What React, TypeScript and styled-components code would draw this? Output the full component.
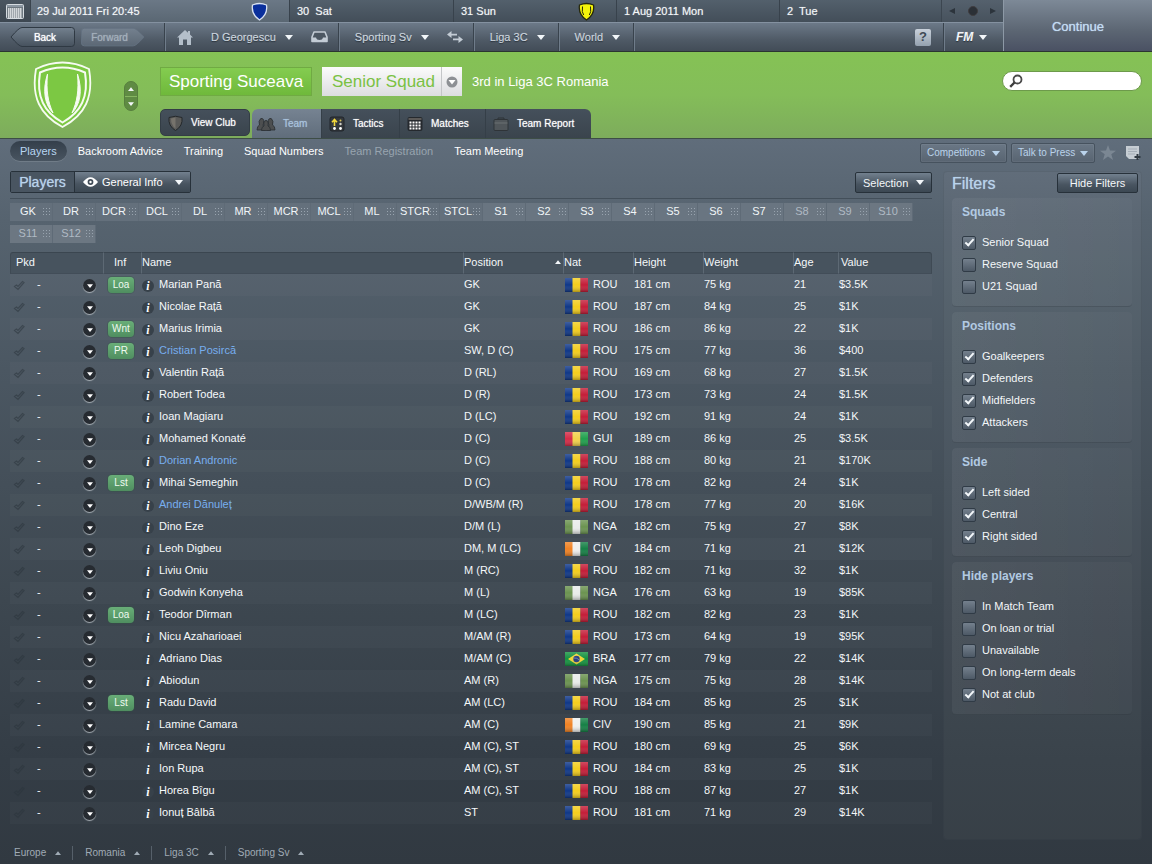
import React from "react";
import styled, { createGlobalStyle, css } from "styled-components";

const Global = createGlobalStyle`
  *, *::before, *::after { box-sizing: border-box; }
  body {
    margin: 0;
    background: #323a43;
    color: #f4f7f9;
    font-family: "Liberation Sans", Arial, Helvetica, sans-serif;
    font-size: 11px;
    line-height: 14px;
  }
  button, select, input { font: inherit; color: inherit; margin: 0; }
  button { cursor: pointer; background: none; border: 0; padding: 0; white-space: nowrap; }
  a { color: inherit; text-decoration: none; white-space: nowrap; }
`;

const Page = styled.div`
  min-height: 100vh;
  display: flex;
  flex-direction: column;
  background: linear-gradient(#606d7b 139px, #56636f 220px, #4b5762 370px, #3d4750 600px, #343d46 760px, #313941 864px);
`;

/* ---------- top bars ---------- */

const TopArea = styled.header`
  display: flex;
  height: 52px;
  border-bottom: 1px solid #2b3531;
`;

const TopRows = styled.div`
  flex: 1;
  min-width: 0;
`;

const DayBar = styled.div`
  display: grid;
  grid-template-columns: 31px 258fr 164fr 163fr 163fr 162fr 62px;
  height: 22px;
  background: linear-gradient(#53606c, #434e59);
`;

const DayCell = styled.div<{ $today?: boolean }>`
  display: flex;
  align-items: center;
  justify-content: space-between;
  padding: 0 21px 0 7px;
  border-left: 1px solid #38424c;
  text-shadow: 0 0 1px rgba(255, 255, 255, 0.5);
  ${(p) =>
    p.$today &&
    css`
      padding: 0 21px 0 6px;
      background: linear-gradient(#6b7886, #5a6773);
      border-left: 0;
    `}
`;

const CalendarCell = styled.button`
  display: flex;
  align-items: center;
  justify-content: center;
  background: linear-gradient(#4a5560, #3d4751);
  border-right: 1px solid #3a444e;
`;

const Pager = styled.div`
  display: flex;
  align-items: center;
  justify-content: space-between;
  padding: 0 7px;
  border-left: 1px solid #3c4650;
  background: linear-gradient(#55616d, #47525d);
`;

const PagerButton = styled.button`
  display: flex;
`;

const NavBar = styled.nav`
  display: flex;
  height: 29px;
  border-top: 1px solid #8491a0;
  background: linear-gradient(#6c7988, #4f5a66 60%, #424c57);
`;

const NavGroup = styled.div<{ $kind?: "history" | "home" | "menu" | "fm" }>`
  display: flex;
  align-items: center;
  gap: 18px;
  padding: 0 10px 0 16px;
  color: #ccd5de;
  border-left: 1px solid #39434d;
  box-shadow: inset 1px 0 0 #6f7c8a;
  text-shadow: 0 1px 1px rgba(20, 28, 36, 0.7), 0 0 1px rgba(210, 220, 230, 0.6);
  ${(p) =>
    p.$kind === "history" &&
    css`
      border-left: 0;
      box-shadow: none;
      gap: 6px;
      padding: 0 19px 0 10px;
    `}
  ${(p) => p.$kind === "home" && css`padding-left: 12px;`}
  ${(p) => p.$kind === "menu" && css`padding-right: 13px;`}
  ${(p) =>
    p.$kind === "fm" &&
    css`
      width: 60px;
      padding: 0 0 0 12px;
    `}
`;

const NavMenu = styled.button<{ $tight?: boolean }>`
  display: flex;
  align-items: center;
  gap: ${(p) => (p.$tight ? 6 : 9)}px;
  text-shadow: inherit;
`;

const IconButton = styled.button`
  display: flex;
`;

const ArrowButton = styled.button<{ $dir: "back" | "forward" }>`
  display: grid;
  width: ${(p) => (p.$dir === "back" ? 65 : 64)}px;
  height: 22px;
  font-size: 10px;
  color: ${(p) => (p.$dir === "back" ? "#ffffff" : "#a3afbb")};
  text-shadow: 0 0 1px currentColor;
  > * { grid-area: 1 / 1; }
`;

const ArrowText = styled.span<{ $dir: "back" | "forward" }>`
  align-self: center;
  padding: ${(p) => (p.$dir === "back" ? "2px 0 0 5px" : "1px 7px 0 0")};
`;

const Grow = styled.div`
  flex: 1;
`;

const HelpButton = styled.button`
  align-self: center;
  width: 16px;
  height: 17px;
  margin-right: 12px;
  border-radius: 2px;
  background: linear-gradient(#c9d1db, #94a1af);
  color: #3f4a55;
  font-size: 13px;
  font-weight: bold;
`;

const FmText = styled.span`
  font-size: 12px;
  line-height: 14px;
  font-weight: bold;
  font-style: italic;
  color: #f2f5f8;
`;

const ContinueButton = styled.button`
  width: 149px;
  padding-top: 2px;
  font-size: 13px;
  color: #c3dcf4;
  text-shadow: 0 0 1px rgba(195, 220, 244, 0.9);
  background: linear-gradient(#7d8997, #5c6673 60%, #4a5163);
  border-left: 1px solid #8d99a6;
`;

/* ---------- club header ---------- */

const ClubHeader = styled.section`
  display: flex;
  height: 87px;
  background: linear-gradient(#85c255 0%, #84bd59 50%, #7dac5c 100%);
  border-bottom: 1px solid #3d4d46;
`;

const CrestArea = styled.div`
  display: flex;
  align-items: center;
  justify-content: space-between;
  width: 160px;
  padding: 0 22px 0 32px;
`;

const Stepper = styled.div`
  display: flex;
  flex-direction: column;
  width: 14px;
  margin-top: 2px;
  border-radius: 7px;
  overflow: hidden;
  background: #5f8b43;
  border: 1px solid #577f3e;
`;

const StepButton = styled.button`
  display: flex;
  align-items: center;
  justify-content: center;
  height: 14px;
  & + & { border-top: 1px solid #86b561; }
`;

const ClubMain = styled.div`
  flex: 1;
  display: flex;
  flex-direction: column;
  justify-content: space-between;
  padding-top: 15px;
`;

const TitleRow = styled.div`
  display: flex;
  align-items: center;
  gap: 10px;
  height: 29px;
`;

const ClubName = styled.h1`
  margin: 0;
  height: 29px;
  width: 152px;
  text-align: center;
  font-size: 17px;
  line-height: 27px;
  font-weight: normal;
  color: #ffffff;
  border: 1px solid #70aa43;
  background: linear-gradient(#84cc50, #6fb93b);
`;

const SquadPicker = styled.div`
  display: grid;
  width: 140px;
  height: 29px;
  background: linear-gradient(#fbfbfb, #dcdde0);
  > * { grid-area: 1 / 1; }
`;

const SquadSelect = styled.select`
  appearance: none;
  border: 0;
  padding: 0 20px 0 10px;
  background: transparent;
  font-size: 17px;
  line-height: 20px;
  color: #7ac143;
`;

const SquadArrow = styled.span`
  justify-self: end;
  display: flex;
  align-items: center;
  justify-content: center;
  width: 21px;
  border-left: 1px solid #c4c6c8;
  pointer-events: none;
`;

const Standing = styled.span`
  font-size: 13px;
  line-height: 16px;
  color: #ffffff;
`;

const Search = styled.label`
  display: flex;
  align-items: center;
  gap: 4px;
  width: 140px;
  height: 20px;
  margin: 19px 10px 0 0;
  padding: 0 8px 0 6px;
  border: 1px solid #6d9a4b;
  border-radius: 10px;
  background: #ffffff;
`;

const SearchInput = styled.input`
  flex: 1;
  min-width: 0;
  border: 0;
  outline: 0;
  padding: 0;
  background: transparent;
  color: #333c44;
`;

const TabRow = styled.div`
  display: flex;
  gap: 2px;
  height: 29px;
`;

const TabGroup = styled.div`
  display: flex;
  border-radius: 6px 6px 0 0;
  overflow: hidden;
`;

const Tab = styled.button<{ $w: number; $active?: boolean; $solo?: boolean }>`
  display: flex;
  align-items: center;
  gap: 8px;
  width: ${(p) => p.$w}px;
  padding-left: 7px;
  font-size: 10px;
  color: #ffffff;
  text-shadow: 0 0 1px rgba(255, 255, 255, 0.7);
  background: linear-gradient(#45505b, #3a444d);
  border-right: 1px solid #353f48;
  &:last-child { border-right: 0; }
  > svg { flex: none; }
  ${(p) =>
    p.$active &&
    css`
      color: #a9c3de;
      padding-left: 4px;
      gap: 7px;
      text-shadow: 0 0 1px rgba(169, 195, 222, 0.8);
      background: linear-gradient(#768392, #606d7b);
    `}
  ${(p) =>
    p.$solo &&
    css`
      height: 27px;
      border-radius: 5px;
      border: 1px solid #333d45;
    `}
`;

/* ---------- sub navigation ---------- */

const SubNav = styled.nav`
  display: flex;
  align-items: center;
  gap: 1px;
  height: 32px;
  padding: 0 11px 8px 10px;
`;

const SubLink = styled.a<{ $state?: "on" | "off" }>`
  padding: 3px 10px;
  border-radius: 10px;
  color: ${(p) => (p.$state === "on" ? "#b9d6f2" : p.$state === "off" ? "#98a4af" : "#ffffff")};
  ${(p) =>
    p.$state === "on" &&
    css`
      background: linear-gradient(#343f4b, #485460);
      box-shadow: 0 1px 0 rgba(255, 255, 255, 0.12);
    `}
`;

const MenuButton = styled.button<{ $w: number; $quiet?: boolean }>`
  display: flex;
  align-items: center;
  justify-content: space-between;
  width: ${(p) => p.$w}px;
  height: 21px;
  padding: 0 7px;
  border-radius: 2px;
  border: 1px solid #27313a;
  background: linear-gradient(#72808e, #485460 60%, #3c4853);
  ${(p) =>
    p.$quiet &&
    css`
      height: 20px;
      margin: 3px 3px 0 0;
      padding: 1px 6px 0;
      font-size: 10px;
      color: #bad3eb;
      border-color: #46525e;
      box-shadow: inset 0 0 0 1px rgba(255, 255, 255, 0.05);
      background: linear-gradient(#6a7785, #586471);
    `}
`;

const ToolIcons = styled.div`
  display: flex;
  align-items: center;
  gap: 9px;
  margin: 3px 0 0 1px;
`;

/* ---------- main area ---------- */

const Content = styled.main`
  flex: 1;
  display: flex;
  gap: 11px;
  padding: 0 10px 2px 10px;
`;

const Squad = styled.section`
  flex: 1;
  min-width: 0;
`;

const ToolBar = styled.div`
  display: flex;
  align-items: flex-end;
  justify-content: space-between;
  height: 22px;
`;

const ViewBox = styled.div`
  display: flex;
  width: 181px;
  height: 22px;
  border: 1px solid #27313a;
  border-radius: 2px;
`;

const ViewTitle = styled.h2`
  margin: 0;
  width: 64px;
  text-align: center;
  font-size: 14px;
  line-height: 20px;
  font-weight: normal;
  color: #b9d3ec;
  text-shadow: 0 0 1px rgba(185, 211, 236, 0.8);
  background: #495561;
  border-right: 1px solid #27313a;
`;

const ViewPicker = styled.div`
  flex: 1;
  display: flex;
  align-items: center;
  padding: 0 7px 0 8px;
  gap: 4px;
  background: linear-gradient(#72808e, #485460 60%, #3c4853);
`;

const ViewSelect = styled.select`
  flex: 1;
  min-width: 0;
  appearance: none;
  border: 0;
  padding: 0;
  background: transparent;
  color: #ffffff;
`;

const Chips = styled.div`
  display: flex;
  flex-wrap: wrap;
  row-gap: 4px;
  margin-top: 5px;
  padding: 4px 0 9px;
  border-top: 1px solid #434f5a;
`;

const Chip = styled.button<{ $tone: "slot" | "bench" | "dim" }>`
  display: flex;
  align-items: center;
  width: 43px;
  height: 18px;
  padding-bottom: 2px;
  color: ${(p) => (p.$tone === "dim" ? "#b0bac4" : "#f1f5f8")};
  background: ${(p) => (p.$tone === "dim" ? "#6c7782" : p.$tone === "bench" ? "#697581" : "#64707c")};
  border-right: 1px solid #5f6b77;
`;

const ChipText = styled.span`
  width: 36px;
  text-align: center;
`;

const GripDots = styled.svg`
  flex: none;
  width: 7px;
  height: 8px;
  margin: 2px 0 0 -3px;
`;

const Table = styled.table`
  width: 100%;
  table-layout: fixed;
  border-collapse: separate;
  border-spacing: 0;
`;

const Col = styled.col<{ $w?: number }>`
  width: ${(p) => (p.$w ? p.$w + "px" : "auto")};
`;

const Th = styled.th<{ $pad?: number }>`
  height: 22px;
  padding: 0 0 2px ${(p) => p.$pad ?? 0}px;
  text-align: left;
  font-weight: normal;
  background: #47535e;
  border-top: 1px solid #3b4650;
  border-bottom: 1px solid #424d58;
  border-left: 1px solid #5d6974;
  &:first-child { border-left-color: #3f4a54; border-radius: 3px 0 0 0; }
  &:last-child { border-right: 1px solid #3f4a54; border-radius: 0 3px 0 0; }
`;

const SortHead = styled.span`
  display: flex;
  align-items: center;
  justify-content: space-between;
  padding-right: 2px;
`;

const Row = styled.tr`
  height: 22px;
  &:nth-child(odd) { background: rgba(255, 255, 255, 0.022); }
`;

const Td = styled.td<{ $pad?: number }>`
  height: 22px;
  padding: 0 0 2px ${(p) => p.$pad ?? 1}px;
  white-space: nowrap;
`;

const Picked = styled.div`
  display: flex;
  align-items: center;
  gap: 12px;
  > svg { margin-top: 2px; }
  padding: 0 7px 0 3px;
  > button { margin: 3px 0 0 auto; }
`;

const RoundButton = styled.button`
  display: flex;
  align-items: center;
  justify-content: center;
  width: 13px;
  height: 13px;
  padding-top: 1px;
  border-radius: 7px;
  background: #262b31;
  box-shadow: 0 1px 1px rgba(185, 192, 198, 0.85);
`;

const Badge = styled.span`
  display: block;
  width: 26px;
  height: 16px;
  margin-top: 1px;
  text-align: center;
  font-size: 10px;
  line-height: 16px;
  border-radius: 4px;
  color: #eefaf0;
  background: linear-gradient(#69ae78, #4f8e60);
  box-shadow: 0 0 0 1px rgba(50, 85, 65, 0.35);
`;

const NameCell = styled.div`
  display: flex;
  align-items: center;
  gap: 5px;
`;

const Info = styled.button`
  width: 12px;
  height: 12px;
  margin-top: 3px;
  border-radius: 6px;
  background: #37414a;
  font-family: "Liberation Serif", serif;
  font-size: 12px;
  line-height: 12px;
  font-weight: bold;
  font-style: italic;
  color: #ffffff;
`;

const PlayerLink = styled.a<{ $loan?: boolean }>`
  color: ${(p) => (p.$loan ? "#77aeef" : "#f6f9fb")};
`;

const NatCell = styled.div`
  display: flex;
  align-items: center;
  gap: 5px;
  > svg { margin-top: 2px; }
`;

/* ---------- filters ---------- */

const Filters = styled.aside`
  width: 199px;
  flex: none;
  padding: 1px 3px 0 8px;
  border: 1px solid rgba(30, 40, 48, 0.12);
  border-radius: 4px;
  background: rgba(255, 255, 255, 0.03);
`;

const FilterHead = styled.div`
  display: flex;
  align-items: flex-start;
  justify-content: space-between;
  height: 25px;
`;

const FilterTitle = styled.h2`
  margin: 0;
  font-size: 16px;
  line-height: 22px;
  font-weight: normal;
  color: #b9d3ec;
  text-shadow: 0 0 1px rgba(185, 211, 236, 0.8);
`;

const HideButton = styled.button`
  width: 81px;
  height: 20px;
  border-radius: 2px;
  border: 1px solid #27313a;
  background: linear-gradient(#72808e, #485460 60%, #3c4853);
`;

const Group = styled.fieldset`
  min-width: 0;
  margin: 0 6px 5px 0;
  padding: 6px 10px 9px;
  border: 0;
  border-bottom: 1px solid rgba(30, 38, 46, 0.25);
  border-radius: 4px;
  background: linear-gradient(90deg, rgba(255, 255, 255, 0.05), rgba(255, 255, 255, 0.025));
`;

const GroupTitle = styled.legend`
  float: left;
  width: 100%;
  margin-bottom: 11px;
  padding: 0;
  font-size: 12px;
  line-height: 16px;
  font-weight: bold;
  color: #b2cae2;
`;

const Option = styled.label`
  clear: both;
  display: flex;
  align-items: center;
  gap: 6px;
  height: 22px;
`;

const Check = styled.input`
  appearance: none;
  display: flex;
  justify-content: center;
  width: 14px;
  height: 14px;
  margin-top: 2px;
  border: 1px solid #303b46;
  border-radius: 2px;
  background: linear-gradient(#74808d, #4d5966);
  &:checked::after {
    content: "";
    width: 5px;
    height: 9px;
    border: solid #f4f8fb;
    border-width: 0 2px 2px 0;
    transform: rotate(42deg);
  }
`;

/* ---------- footer ---------- */

const Footer = styled.footer`
  display: flex;
  align-items: center;
  height: 22px;
  padding-left: 14px;
  font-size: 10px;
  color: #a0abb5;
`;

const Crumb = styled.button`
  display: flex;
  align-items: center;
  gap: 9px;
  padding-right: 11px;
  & + & { padding-left: 12px; border-left: 1px solid #56606a; }
`;

/* ---------- drawings ---------- */

const Caret = ({ up, size = 8, color = "#f2f6f9" }: { up?: boolean; size?: number; color?: string }) => (
  <svg width={size} height={size / 2 + 1} viewBox="0 0 8 5" aria-hidden>
    <path d={up ? "M4 0 8 5H0z" : "M0 0h8L4 5z"} fill={color} />
  </svg>
);

const Grip = () => (
  <GripDots viewBox="0 0 7 8" aria-hidden>
    <path d="M0 .5h7M0 3.500h7M0 6.500h7" stroke="#98a3ae" strokeDasharray="1 2" />
  </GripDots>
);

const SmallShield = ({ fill, stroke, sides }: { fill: string; stroke: string; sides?: boolean }) => (
  <svg width="17" height="19" viewBox="0 0 17 19" aria-hidden>
    <path d="M1.500 3Q8.500 0 15.500 3Q17 12.500 8.500 18Q0 12.500 1.500 3z" fill={fill} stroke={stroke} strokeWidth="1.300" />
    {sides && <path d="M4.500 4.500q-1 6 1.200 8.500M12.500 4.500q1 6-1.200 8.500" fill="none" stroke={stroke} strokeWidth="1" />}
  </svg>
);

const Crest = () => (
  <svg width="61" height="68" viewBox="0 0 61 68" aria-hidden>
    <path d="M4 8Q30.500-5 57 8C62 36 53 54 30.500 66C8 54-1 36 4 8z" fill="#7cc843" stroke="#f6fbf2" strokeWidth="1.800" />
    <path d="M8 11.500Q30.500 1.500 53 11.500C57 36 49 51 30.500 61.500C12 51 4 36 8 11.500z" fill="none" stroke="#f6fbf2" strokeWidth="2" />
    <path d="M15.500 13C10 30 13 44 21 52C16 41 14 30 15.500 13zM45.500 13C51 30 48 44 40 52C45 41 47 30 45.500 13z" fill="#f6fbf2" stroke="#f6fbf2" />
  </svg>
);

const CalendarIcon = () => (
  <svg width="18" height="15" viewBox="0 0 18 15" aria-hidden>
    <rect x=".5" y=".5" width="17" height="14" rx="1" fill="#6e7880" stroke="#d5dbe0" />
    <path d="M1 1h16v2H1z" fill="#8c97a2" />
    <path d="M2 5h14M2 7h14M2 9h14M2 11h14M2 13h14" stroke="#f3f5f6" strokeWidth="1.400" strokeDasharray="1.500 .5" />
  </svg>
);

const ArrowShape = ({ dir }: { dir: "back" | "forward" }) => (
  <svg width="100%" height="22" viewBox="0 0 65 22" aria-hidden>
    <defs>
      <linearGradient id={"arrow-" + dir} x1="0" y1="0" x2="0" y2="1">
        <stop offset="0" stopColor="#74818f" />
        <stop offset="1" stopColor={dir === "back" ? "#46515d" : "#5c6875"} />
      </linearGradient>
    </defs>
    <path
      d={dir === "back" ? "M12 1.500H61.500q3 0 3 3v13q0 3-3 3H12Q9 20.500 1 11 9 1.500 12 1.500z" : "M3.500 2H53q3 0 11 9-8 9-11 9H3.500q-3 0-3-3V5q0-3 3-3z"}
      fill={`url(#arrow-${dir})`}
      stroke={dir === "back" ? "#2f3943" : "#647180"}
    />
  </svg>
);

const HomeIcon = () => (
  <svg width="16" height="15" viewBox="0 0 16 15" aria-hidden>
    <path d="M8 0 0 7.500h2V15h4V9.500h4V15h4V7.500h2L13 4.600V1h-2v1.800z" fill="#b4bfca" />
  </svg>
);

const InboxIcon = () => (
  <svg width="17" height="12" viewBox="0 0 17 12" aria-hidden>
    <path d="M3 1h11l2 5v4.500H1V6z" fill="#4c5762" stroke="#c3ccd5" strokeWidth="1.600" strokeLinejoin="round" />
    <path d="M1 6.500h4q.5 2.500 3.500 2.500T12 6.500h4V11H1z" fill="#c3ccd5" />
  </svg>
);

const SwapIcon = () => (
  <svg width="16" height="12" viewBox="0 0 16 12" aria-hidden>
    <path d="M4.500 0v2.700H10v1.800H4.500V7L0 3.500zM11.500 5v2.500H6v1.800h5.500V12L16 8.500z" fill="#c3ccd5" />
  </svg>
);

const ShieldTabIcon = () => (
  <svg width="15" height="16" viewBox="0 0 15 16" aria-hidden>
    <path d="M1 2.500Q7.500 0 14 2.500 15 11 7.500 15.500 0 11 1 2.500z" fill="#5a5a58" stroke="#24282b" />
    <path d="M7.500 2.500v11Q3 10 3 3.500z" fill="#76736c" />
  </svg>
);

const TeamIcon = () => (
  <svg width="20" height="14" viewBox="0 0 20 14" aria-hidden>
    <g fill="#4d4f50" stroke="#2a2e32" strokeWidth=".8">
      <path d="M1 13q0-4 2.500-5Q2 4 4.800 1.500 8 1 7.800 5 7.500 7 7 8l2 5zM19 13q0-4-2.500-5Q18 4 15.200 1.500 12 1 12.200 5q.3 2 .8 3l-2 5z" />
      <path d="M5.500 13.500q0-4 2.500-4.500-.8-5.500 2-5.500t2 5.500q2.500.5 2.500 4.500z" />
    </g>
  </svg>
);

const TacticsIcon = () => (
  <svg width="16" height="16" viewBox="0 0 16 16" aria-hidden>
    <rect x="1" y="1" width="14" height="14" rx="2" fill="#34383c" stroke="#20252a" />
    <path d="M5.500 10V4M3 6.200 5.500 3.500l2.500 2.700" fill="none" stroke="#f3d83c" strokeWidth="1.600" />
    <circle cx="5.500" cy="12.500" r="1.400" fill="#fff" />
    <circle cx="11.500" cy="12.500" r="1.400" fill="#fff" />
    <circle cx="11.500" cy="8" r="1.200" fill="#cfcfc8" />
    <circle cx="11.500" cy="4.500" r="1" fill="#d8c25a" />
  </svg>
);

const MatchesIcon = () => (
  <svg width="16" height="16" viewBox="0 0 16 16" aria-hidden>
    <rect x=".5" y="1" width="15" height="14" rx="2" fill="#25292e" />
    <path d="M1.500 2h13v2h-13z" fill="#5c5a58" />
    <path d="M2.500 6.500h11M2.500 9.500h11M2.500 12.500h11" stroke="#fff" strokeWidth="2" strokeDasharray="2 1" />
  </svg>
);

const ReportIcon = () => (
  <svg width="16" height="14" viewBox="0 0 16 14" aria-hidden>
    <path d="M5 2.500V1h6v1.500" fill="none" stroke="#2d3236" />
    <rect x="1" y="2.500" width="14" height="11" rx="1" fill="#50565a" stroke="#2f3438" />
    <path d="M1.500 6h13" stroke="#6b7073" />
  </svg>
);

const SearchIcon = () => (
  <svg width="14" height="14" viewBox="0 0 14 14" aria-hidden>
    <circle cx="8.500" cy="5.500" r="4" fill="none" stroke="#4a4a4a" strokeWidth="1.800" />
    <path d="M5.500 8.500 1.200 12.800" stroke="#3d3d3d" strokeWidth="2.400" />
  </svg>
);

const StarIcon = () => (
  <svg width="16" height="15" viewBox="0 0 16 15" aria-hidden>
    <path d="m8 0 2 5.500 6 .2-4.700 3.600L13 15l-5-3.400L3 15l1.700-5.700L0 5.700l6-.2z" fill="#7b8793" />
  </svg>
);

const NoteIcon = () => (
  <svg width="16" height="16" viewBox="0 0 16 16" aria-hidden>
    <path d="M1 1h13v13H4l-3-3z" fill="#c6cdd3" />
    <path d="M3 4h9M3 6.500h9M3 9h7" stroke="#a5aeb7" />
    <path d="M12.500 9v6M9.500 12h6" stroke="#313a42" strokeWidth="2" />
  </svg>
);

const EyeIcon = () => (
  <svg width="15" height="10" viewBox="0 0 15 10" aria-hidden>
    <path d="M0 5q7.500-9.500 15 0-7.500 9.500-15 0z" fill="#fff" />
    <circle cx="7.500" cy="5" r="2.900" fill="#414c57" />
    <circle cx="7.500" cy="5" r="1.200" fill="#fff" />
  </svg>
);

const PickIcon = () => (
  <svg width="12" height="11" viewBox="0 0 12 11" aria-hidden>
    <path d="M1.500 6.500 3.500 5l1.500 1.500 4.500-5 1.500 1L5 9.500z" fill="none" stroke="#2b343c" strokeOpacity=".55" strokeWidth="1.200" />
  </svg>
);

const STRIPES: Record<string, string[]> = {
  ROU: ["#0f3788", "#f3cd1d", "#c41d38"],
  GUI: ["#d42a46", "#f2d24a", "#1fa04c"],
  NGA: ["#6b9350", "#e9ecea", "#6b9350"],
  CIV: ["#f08223", "#f0f0ee", "#158045"],
};

const Flag = ({ code }: { code: string }) => (
  <svg width="23" height="14" viewBox="0 0 23 14" role="img" aria-label={code}>
    <defs>
      <linearGradient id="gloss" x1="0" y1="0" x2="0" y2="1">
        <stop offset="0" stopColor="#fff" stopOpacity=".2" />
        <stop offset=".5" stopColor="#fff" stopOpacity="0" />
        <stop offset="1" stopColor="#000" stopOpacity=".3" />
      </linearGradient>
    </defs>
    {code === "BRA" ? (
      <>
        <path d="M0 0h23v14H0z" fill="#14923f" />
        <path d="M11.500 1.500 20 7l-8.500 5.500L3 7z" fill="#f0d533" />
        <circle cx="11.500" cy="7" r="3.200" fill="#233a7c" />
        <path d="M8.500 6q3.500-.4 6 2" stroke="#aab6c8" strokeWidth=".6" fill="none" />
      </>
    ) : (
      STRIPES[code].map((c, i) => <rect key={i} x={[0, 7.5, 15.5][i]} width="8" height="14" fill={c} />)
    )}
    <path d="M0 0h23v14H0z" fill="url(#gloss)" />
  </svg>
);

/* ---------- data ---------- */

type Player = [inf: string, name: string, pos: string, nat: string, height: number, weight: number, age: number, value: string];

const PLAYERS: Player[] = [
  ["Loa", "Marian Pană", "GK", "ROU", 181, 75, 21, "$3.5K"],
  ["", "Nicolae Rață", "GK", "ROU", 187, 84, 25, "$1K"],
  ["Wnt", "Marius Irimia", "GK", "ROU", 186, 86, 22, "$1K"],
  ["PR", "Cristian Posircă", "SW, D (C)", "ROU", 175, 77, 36, "$400"],
  ["", "Valentin Rață", "D (RL)", "ROU", 169, 68, 27, "$1.5K"],
  ["", "Robert Todea", "D (R)", "ROU", 173, 73, 24, "$1.5K"],
  ["", "Ioan Magiaru", "D (LC)", "ROU", 192, 91, 24, "$1K"],
  ["", "Mohamed Konaté", "D (C)", "GUI", 189, 86, 25, "$3.5K"],
  ["", "Dorian Andronic", "D (C)", "ROU", 188, 80, 21, "$170K"],
  ["Lst", "Mihai Semeghin", "D (C)", "ROU", 178, 82, 24, "$1K"],
  ["", "Andrei Dănuleț", "D/WB/M (R)", "ROU", 178, 77, 20, "$16K"],
  ["", "Dino Eze", "D/M (L)", "NGA", 182, 75, 27, "$8K"],
  ["", "Leoh Digbeu", "DM, M (LC)", "CIV", 184, 71, 21, "$12K"],
  ["", "Liviu Oniu", "M (RC)", "ROU", 182, 71, 32, "$1K"],
  ["", "Godwin Konyeha", "M (L)", "NGA", 176, 63, 19, "$85K"],
  ["Loa", "Teodor Dîrman", "M (LC)", "ROU", 182, 82, 23, "$1K"],
  ["", "Nicu Azaharioaei", "M/AM (R)", "ROU", 173, 64, 19, "$95K"],
  ["", "Adriano Dias", "M/AM (C)", "BRA", 177, 79, 22, "$14K"],
  ["", "Abiodun", "AM (R)", "NGA", 175, 75, 28, "$14K"],
  ["Lst", "Radu David", "AM (LC)", "ROU", 184, 85, 25, "$1K"],
  ["", "Lamine Camara", "AM (C)", "CIV", 190, 85, 21, "$9K"],
  ["", "Mircea Negru", "AM (C), ST", "ROU", 180, 69, 25, "$6K"],
  ["", "Ion Rupa", "AM (C), ST", "ROU", 184, 83, 25, "$1K"],
  ["", "Horea Bîgu", "AM (C), ST", "ROU", 188, 87, 27, "$1K"],
  ["", "Ionuț Bâlbă", "ST", "ROU", 181, 71, 29, "$14K"],
];

const HIGHLIGHTED = ["Cristian Posircă", "Dorian Andronic", "Andrei Dănuleț"];

const SLOTS =
  "GK DR DCR DCL DL MR MCR MCL ML STCR STCL S1 S2 S3 S4 S5 S6 S7 S8 S9 S10 S11 S12".split(" ");

const FILTERS: { title: string; options: [string, boolean][] }[] = [
  { title: "Squads", options: [["Senior Squad", true], ["Reserve Squad", false], ["U21 Squad", false]] },
  { title: "Positions", options: [["Goalkeepers", true], ["Defenders", true], ["Midfielders", true], ["Attackers", true]] },
  { title: "Side", options: [["Left sided", true], ["Central", true], ["Right sided", true]] },
  {
    title: "Hide players",
    options: [["In Match Team", false], ["On loan or trial", false], ["Unavailable", false], ["On long-term deals", false], ["Not at club", true]],
  },
];

export default function App() {
  return (
    <Page>
      <Global />
      <TopArea>
        <TopRows>
          <DayBar>
            <CalendarCell aria-label="Calendar"><CalendarIcon /></CalendarCell>
            <DayCell $today>29 Jul 2011 Fri 20:45<SmallShield fill="#0a2f9c" stroke="#d9e2f2" /></DayCell>
            <DayCell>30&nbsp; Sat</DayCell>
            <DayCell>31 Sun<SmallShield fill="#f4f40a" stroke="#26280c" sides /></DayCell>
            <DayCell>1 Aug 2011 Mon</DayCell>
            <DayCell>2&nbsp; Tue</DayCell>
            <Pager>
              <PagerButton aria-label="Earlier">
                <svg width="6" height="6" viewBox="0 0 6 6"><path d="M6 0v6L0 3z" fill="#2c343c" /></svg>
              </PagerButton>
              <PagerButton aria-label="Today">
                <svg width="10" height="10" viewBox="0 0 10 10"><circle cx="5" cy="5" r="4.500" fill="#2b3036" stroke="#3f3d40" /></svg>
              </PagerButton>
              <PagerButton aria-label="Later">
                <svg width="6" height="6" viewBox="0 0 6 6"><path d="M0 0v6l6-3z" fill="#2c343c" /></svg>
              </PagerButton>
            </Pager>
          </DayBar>
          <NavBar>
            <NavGroup $kind="history">
              <ArrowButton $dir="back"><ArrowShape dir="back" /><ArrowText $dir="back">Back</ArrowText></ArrowButton>
              <ArrowButton $dir="forward"><ArrowShape dir="forward" /><ArrowText $dir="forward">Forward</ArrowText></ArrowButton>
            </NavGroup>
            <NavGroup $kind="home">
              <IconButton aria-label="Home"><HomeIcon /></IconButton>
              <NavMenu>D Georgescu <Caret /></NavMenu>
              <IconButton aria-label="Inbox"><InboxIcon /></IconButton>
            </NavGroup>
            <NavGroup>
              <NavMenu>Sporting Sv <Caret /></NavMenu>
              <IconButton aria-label="Switch club"><SwapIcon /></IconButton>
            </NavGroup>
            <NavGroup $kind="menu"><NavMenu>Liga 3C <Caret /></NavMenu></NavGroup>
            <NavGroup $kind="menu"><NavMenu>World <Caret /></NavMenu></NavGroup>
            <NavGroup />
            <Grow />
            <HelpButton>?</HelpButton>
            <NavGroup $kind="fm"><NavMenu $tight><FmText>FM</FmText><Caret /></NavMenu></NavGroup>
          </NavBar>
        </TopRows>
        <ContinueButton>Continue</ContinueButton>
      </TopArea>

      <ClubHeader>
        <CrestArea>
          <Crest />
          <Stepper>
            <StepButton aria-label="Previous club"><Caret up size={6} /></StepButton>
            <StepButton aria-label="Next club"><Caret size={6} /></StepButton>
          </Stepper>
        </CrestArea>
        <ClubMain>
          <TitleRow>
            <ClubName>Sporting Suceava</ClubName>
            <SquadPicker>
              <SquadSelect aria-label="Squad"><option>Senior Squad</option></SquadSelect>
              <SquadArrow>
                <svg width="12" height="12" viewBox="0 0 12 12"><circle cx="6" cy="6" r="5.500" fill="#8d9094" /><path d="M2.500 4h7L6 8.500z" fill="#fff" /></svg>
              </SquadArrow>
            </SquadPicker>
            <Standing>3rd in Liga 3C Romania</Standing>
          </TitleRow>
          <TabRow>
            <Tab $w={90} $solo><ShieldTabIcon />View Club</Tab>
            <TabGroup>
              <Tab $w={70} $active><TeamIcon />Team</Tab>
              <Tab $w={78}><TacticsIcon />Tactics</Tab>
              <Tab $w={86}><MatchesIcon />Matches</Tab>
              <Tab $w={105}><ReportIcon />Team Report</Tab>
            </TabGroup>
          </TabRow>
        </ClubMain>
        <Search><SearchIcon /><SearchInput type="search" aria-label="Search" /></Search>
      </ClubHeader>

      <SubNav>
        <SubLink href="#players" $state="on">Players</SubLink>
        <SubLink href="#advice">Backroom Advice</SubLink>
        <SubLink href="#training">Training</SubLink>
        <SubLink href="#numbers">Squad Numbers</SubLink>
        <SubLink href="#registration" $state="off">Team Registration</SubLink>
        <SubLink href="#meeting">Team Meeting</SubLink>
        <Grow />
        <MenuButton $w={87} $quiet>Competitions <Caret color="#bad3eb" /></MenuButton>
        <MenuButton $w={84} $quiet>Talk to Press <Caret color="#bad3eb" /></MenuButton>
        <ToolIcons>
          <IconButton aria-label="Bookmark"><StarIcon /></IconButton>
          <IconButton aria-label="Add note"><NoteIcon /></IconButton>
        </ToolIcons>
      </SubNav>

      <Content>
        <Squad>
          <ToolBar>
            <ViewBox>
              <ViewTitle>Players</ViewTitle>
              <ViewPicker>
                <EyeIcon />
                <ViewSelect aria-label="View"><option>General Info</option></ViewSelect>
                <Caret />
              </ViewPicker>
            </ViewBox>
            <MenuButton $w={77}>Selection <Caret /></MenuButton>
          </ToolBar>
          <Chips>
            {SLOTS.map((s, i) => (
              <Chip key={s} $tone={i > 17 ? "dim" : i > 10 ? "bench" : "slot"}><ChipText>{s}</ChipText><Grip /></Chip>
            ))}
          </Chips>
          <Table>
            <colgroup>
              <Col $w={93} /><Col $w={38} /><Col /><Col $w={100} /><Col $w={70} /><Col $w={70} /><Col $w={90} /><Col $w={45} /><Col $w={94} />
            </colgroup>
            <thead>
              <tr>
                <Th $pad={5}>Pkd</Th>
                <Th $pad={10}>Inf</Th>
                <Th>Name</Th>
                <Th><SortHead>Position<Caret up size={6} /></SortHead></Th>
                <Th>Nat</Th>
                <Th>Height</Th>
                <Th>Weight</Th>
                <Th>Age</Th>
                <Th $pad={2}>Value</Th>
              </tr>
            </thead>
            <tbody>
              {PLAYERS.map(([inf, name, pos, nat, height, weight, age, value]) => (
                <Row key={name}>
                  <Td $pad={0}>
                    <Picked>
                      <PickIcon />-
                      <RoundButton aria-label="Pick position"><Caret size={6} color="#ffffff" /></RoundButton>
                    </Picked>
                  </Td>
                  <Td $pad={5}>{inf && <Badge>{inf}</Badge>}</Td>
                  <Td><NameCell><Info>i</Info><PlayerLink href="#player" $loan={HIGHLIGHTED.includes(name)}>{name}</PlayerLink></NameCell></Td>
                  <Td>{pos}</Td>
                  <Td $pad={2}><NatCell><Flag code={nat} />{nat}</NatCell></Td>
                  <Td>{height} cm</Td>
                  <Td>{weight} kg</Td>
                  <Td>{age}</Td>
                  <Td>{value}</Td>
                </Row>
              ))}
            </tbody>
          </Table>
        </Squad>

        <Filters>
          <FilterHead>
            <FilterTitle>Filters</FilterTitle>
            <HideButton>Hide Filters</HideButton>
          </FilterHead>
          {FILTERS.map((g) => (
            <Group key={g.title}>
              <GroupTitle>{g.title}</GroupTitle>
              {g.options.map(([label, on]) => (
                <Option key={label}><Check type="checkbox" defaultChecked={on} />{label}</Option>
              ))}
            </Group>
          ))}
        </Filters>
      </Content>

      <Footer>
        {["Europe", "Romania", "Liga 3C", "Sporting Sv"].map((c) => (
          <Crumb key={c}>{c}<Caret up size={6} color="#a0abb5" /></Crumb>
        ))}
      </Footer>
    </Page>
  );
}
